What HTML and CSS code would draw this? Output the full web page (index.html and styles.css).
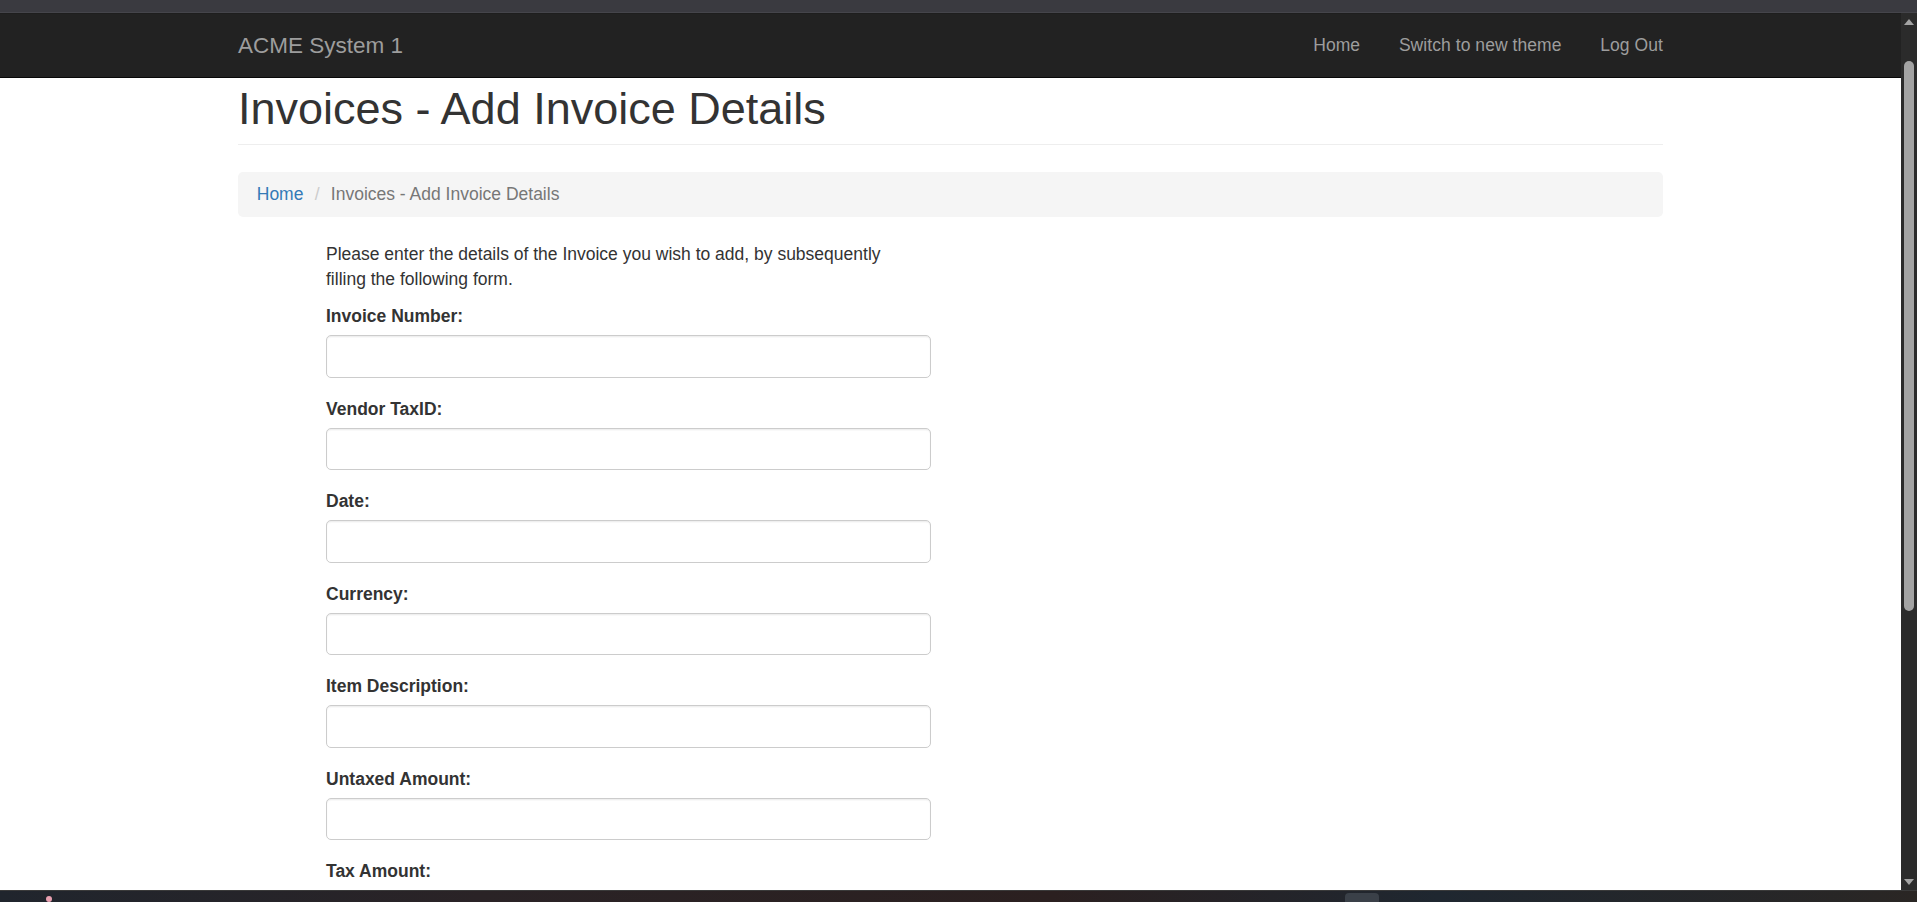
FILE: index.html
```html
<!DOCTYPE html>
<html lang="en">
<head>
<meta charset="utf-8">
<title>Invoices - Add Invoice Details</title>
<link rel="stylesheet" href="styles.css">
</head>
<body>
<div class="topstrip"></div>
<div class="window">
  <div class="viewport">
    <nav class="navbar">
      <div class="container nav-inner">
        <a class="brand" href="#">ACME System 1</a>
        <ul class="nav-links">
          <li><a href="#">Home</a></li>
          <li><a href="#">Switch to new theme</a></li>
          <li><a href="#">Log Out</a></li>
        </ul>
      </div>
    </nav>
    <div class="container">
      <div class="page-header">
        <h1>Invoices - Add Invoice Details</h1>
      </div>
      <ol class="breadcrumb">
        <li><a href="#">Home</a></li>
        <li class="sep">/</li>
        <li class="active">Invoices - Add Invoice Details</li>
      </ol>
      <form class="invoice-form">
        <p>Please enter the details of the Invoice you wish to add, by subsequently filling the following form.</p>
        <div class="form-group">
          <label>Invoice Number:</label>
          <input class="form-control" type="text">
        </div>
        <div class="form-group">
          <label>Vendor TaxID:</label>
          <input class="form-control" type="text">
        </div>
        <div class="form-group">
          <label>Date:</label>
          <input class="form-control" type="text">
        </div>
        <div class="form-group">
          <label>Currency:</label>
          <input class="form-control" type="text">
        </div>
        <div class="form-group">
          <label>Item Description:</label>
          <input class="form-control" type="text">
        </div>
        <div class="form-group">
          <label>Untaxed Amount:</label>
          <input class="form-control" type="text">
        </div>
        <div class="form-group">
          <label>Tax Amount:</label>
          <input class="form-control" type="text">
        </div>
      </form>
    </div>
  </div>
  <div class="scrollbar">
    <div class="sb-btn"><span class="arrow-up"></span></div>
    <div class="sb-track"><div class="sb-thumb"></div></div>
    <div class="sb-btn"><span class="arrow-down"></span></div>
  </div>
</div>
<div class="taskbar">
  <span class="tb-dot"></span>
  <span class="tb-item"></span>
</div>
</body>
</html>
```
FILE: styles.css
```css
* { box-sizing: border-box; }
html, body { margin: 0; padding: 0; }
body {
  height: 902px;
  overflow: hidden;
  display: flex;
  flex-direction: column;
  background: #3a3a40;
  font-family: "Liberation Sans", Arial, Helvetica, sans-serif;
}
.topstrip {
  height: 13px;
  flex: none;
  background: #3a3a40;
  border-bottom: 1px solid #45454b;
}
.window {
  flex: 1;
  display: flex;
  min-height: 0;
}
.viewport {
  flex: 1;
  min-width: 0;
  overflow: hidden;
  background: #fff;
  zoom: 1.25;
  font-size: 14px;
  line-height: 1.42857143;
  color: #333;
}
.container {
  width: 1170px;
  margin: 0 auto;
  padding: 0 15px;
}
.navbar {
  background: #222;
  border-top: 1px solid #1e1e1e;
  border-bottom: 1px solid #080808;
  height: 52px;
}
.nav-inner {
  display: flex;
  justify-content: space-between;
  align-items: stretch;
  height: 50px;
}
.brand {
  color: #9d9d9d;
  font-size: 18px;
  line-height: 20px;
  padding: 15px;
  margin-left: -15px;
  text-decoration: none;
}
.nav-links {
  list-style: none;
  margin: 0 -15px 0 0;
  padding: 0;
  display: flex;
}
.nav-links a {
  display: block;
  color: #9d9d9d;
  text-decoration: none;
  padding: 15px 15px 15px 16px;
  line-height: 20px;
  letter-spacing: 0.05px;
}
.page-header {
  margin: 4px 0 21px;
  padding-bottom: 9px;
  border-bottom: 1px solid #eee;
}
.page-header h1 {
  margin: 0;
  padding-top: 0.5px;
  font-size: 36px;
  font-weight: 500;
  line-height: 1.1;
  color: #333;
}
.breadcrumb {
  list-style: none;
  margin: 0 0 20px;
  padding: 8px 15px;
  background: #f5f5f5;
  border-radius: 4px;
  display: flex;
  line-height: 20px;
}
.breadcrumb a {
  color: #337ab7;
  text-decoration: none;
}
.breadcrumb .sep {
  color: #ccc;
  padding: 0 5px 0 9px;
  margin-right: 4px;
}
.breadcrumb .active { color: #777; }
.invoice-form {
  margin-left: 70.4px;
  width: 484px;
}
.invoice-form p {
  margin: 0 0 10px;
  padding-top: 1px;
  margin-top: -1px;
  max-width: 470px;
}
.form-group { margin-bottom: 15px; }
.form-group label {
  display: inline-block;
  margin-bottom: 5px;
  font-weight: 700;
}
.form-control {
  display: block;
  width: 100%;
  height: 34px;
  padding: 6px 12px;
  font: inherit;
  color: #555;
  background: #fff;
  border: 1px solid #ccc;
  border-radius: 4px;
  box-shadow: inset 0 1px 1px rgba(0,0,0,.075);
}
.scrollbar {
  width: 16px;
  flex: none;
  background: #2b2b2b;
  display: flex;
  flex-direction: column;
}
.sb-btn {
  height: 17px;
  display: flex;
  align-items: center;
  justify-content: center;
}
.arrow-up, .arrow-down {
  width: 0;
  height: 0;
  border-left: 5px solid transparent;
  border-right: 5px solid transparent;
}
.arrow-up { border-bottom: 6px solid #a3a3a3; }
.arrow-down { border-top: 6px solid #a3a3a3; }
.sb-track {
  flex: 1;
  display: flex;
  justify-content: center;
}
.sb-thumb {
  margin-top: 31px;
  width: 10px;
  height: 550px;
  border-radius: 5px;
  background: #a3a3a3;
}
.taskbar {
  height: 12px;
  flex: none;
  border-top: 1px solid #3a3a3a;
  background: linear-gradient(90deg, #20252d 0%, #2a2326 25%, #2b2020 55%, #1f2730 75%, #2a2624 100%);
  display: flex;
  align-items: flex-start;
}
.tb-dot {
  margin: 5px 0 0 46px;
  width: 6px;
  height: 6px;
  border-radius: 3px;
  background: #e8a0b0;
}
.tb-item {
  margin: 2px 0 0 1293px;
  width: 34px;
  height: 10px;
  border-radius: 4px 4px 0 0;
  background: #3a4048;
}
```
